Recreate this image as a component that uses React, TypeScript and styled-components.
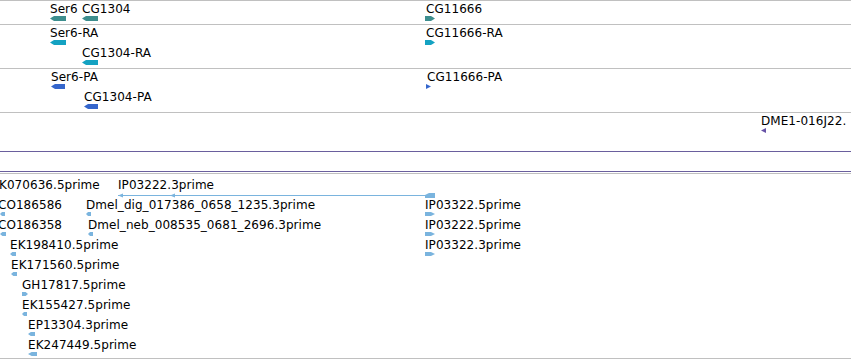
import React from 'react';
import styled, { createGlobalStyle } from 'styled-components';

const GlobalStyle = createGlobalStyle`
  html, body { margin: 0; padding: 0; background: #ffffff; }
  body { font-family: "DejaVu Sans", "Noto Sans", sans-serif; font-size: 12px; color: #000; }
`;

const GRAY = '#c0c0c0';
const PURPLE_LINE = '#6a5f9d';
const TEAL = '#3d8e8e';
const CYAN = '#14a2c2';
const BLUE = '#3566cc';
const VIOLET = '#6652a6';
const EST = '#7ab4de';

const Browser = styled.div`
  width: 851px;
  height: 360px;
  overflow: hidden;
  display: flex;
  flex-direction: column;
  background: #fff;
`;

const GeneTrack = styled.div`
  display: flex;
  flex-direction: column;
  border-top: 1px solid ${GRAY};
`;

const Lane = styled.div<{ $h: number; $edge?: string }>`
  position: relative;
  flex-shrink: 0;
  height: ${p => p.$h}px;
  border-bottom: 1px solid ${p => p.$edge ?? GRAY};
  overflow: hidden;
`;

const Divider = styled.div`
  flex-shrink: 0;
  height: 19px;
  border-bottom: 1px solid ${PURPLE_LINE};
`;

const EstTrack = styled.div`
  margin-top: 1px;
  border-top: 1px solid ${GRAY};
  border-bottom: 1px solid ${GRAY};
  padding: 3px 0 1px;
  display: flex;
  flex-direction: column;
`;

const EstRow = styled.div`
  position: relative;
  height: 20px;
  flex-shrink: 0;
`;

const Feature = styled.div<{ $x: number; $y: number }>`
  position: absolute;
  left: ${p => p.$x}px;
  top: ${p => p.$y}px;
  display: flex;
  flex-direction: column;
  align-items: flex-start;
`;

const Label = styled.span<{ $dx?: number }>`
  display: block;
  height: 14px;
  line-height: 14px;
  white-space: nowrap;
  letter-spacing: 0.05px;
  margin-left: ${p => p.$dx ?? 0}px;
`;

const GlyphSvg = styled.svg<{ $dx?: number }>`
  display: block;
  margin-left: ${p => p.$dx ?? 0}px;
`;

type Dir = 'L' | 'R' | 'TL' | 'TR';

type GlyphSpec = { w: number; h: number; dir: Dir; color: string; dx?: number };

function shape(w: number, h: number, dir: Dir): string {
  const m = h / 2;
  const a = Math.min(4, w * 0.4);
  switch (dir) {
    case 'L':
      return `0,${m} ${a},0 ${w},0 ${w},${h} ${a},${h}`;
    case 'R':
      return `0,0 ${w - a},0 ${w},${m} ${w - a},${h} 0,${h}`;
    case 'TL':
      return `0,${m} ${w},0 ${w},${h}`;
    case 'TR':
      return `0,0 ${w},${m} 0,${h}`;
  }
}

const Glyph: React.FC<GlyphSpec> = ({ w, h, dir, color, dx }) => (
  <GlyphSvg $dx={dx} width={w} height={h} viewBox={`0 0 ${w} ${h}`}>
    <polygon points={shape(w, h, dir)} fill={color} />
  </GlyphSvg>
);

type FeatureSpec = { label: string; x: number; y: number; ldx?: number; glyph: GlyphSpec };

const FeatureItem: React.FC<FeatureSpec> = ({ label, x, y, ldx, glyph }) => (
  <Feature $x={x} $y={y}>
    <Label $dx={ldx}>{label}</Label>
    <Glyph {...glyph} />
  </Feature>
);

const lanes: { h: number; edge?: string; features: FeatureSpec[] }[] = [
  {
    h: 23,
    features: [
      { label: 'Ser6', x: 50, y: 1, glyph: { w: 16, h: 5, dir: 'L', color: TEAL } },
      { label: 'CG1304', x: 82, y: 1, glyph: { w: 16, h: 5, dir: 'L', color: TEAL } },
      { label: 'CG11666', x: 425, y: 1, ldx: 1, glyph: { w: 10, h: 5, dir: 'R', color: TEAL } },
    ],
  },
  {
    h: 43,
    features: [
      { label: 'Ser6-RA', x: 50, y: 1, glyph: { w: 16, h: 5, dir: 'L', color: CYAN } },
      { label: 'CG1304-RA', x: 82, y: 21, glyph: { w: 16, h: 5, dir: 'L', color: CYAN } },
      { label: 'CG11666-RA', x: 425, y: 1, ldx: 1, glyph: { w: 10, h: 5, dir: 'R', color: CYAN } },
    ],
  },
  {
    h: 43,
    features: [
      { label: 'Ser6-PA', x: 51, y: 1, glyph: { w: 14, h: 5, dir: 'L', color: BLUE } },
      { label: 'CG1304-PA', x: 84, y: 21, glyph: { w: 14, h: 5, dir: 'L', color: BLUE } },
      { label: 'CG11666-PA', x: 426, y: 1, ldx: 1, glyph: { w: 5, h: 5, dir: 'TR', color: BLUE } },
    ],
  },
  {
    h: 38,
    edge: PURPLE_LINE,
    features: [
      { label: 'DME1-016J22.', x: 761, y: 1, glyph: { w: 5, h: 5, dir: 'TL', color: VIOLET } },
    ],
  },
];

const est = (label: string, x: number, w: number, dir: Dir, ldx = 0, gdx = 0): FeatureSpec => ({
  label,
  x,
  y: 1,
  ldx,
  glyph: { w, h: 4, dir, color: EST, dx: gdx },
});

const estRows: FeatureSpec[][] = [
  [],
  [
    est('CO186586', -2, 5, 'L', 0, 2),
    est('Dmel_dig_017386_0658_1235.3prime', 86, 5, 'L'),
    est('IP03322.5prime', 425, 10, 'R'),
  ],
  [
    est('CO186358', -2, 6, 'L', 0, 2),
    est('Dmel_neb_008535_0681_2696.3prime', 88, 5, 'L'),
    est('IP03222.5prime', 425, 10, 'R'),
  ],
  [est('EK198410.5prime', 10, 6, 'L'), est('IP03322.3prime', 425, 10, 'R')],
  [est('EK171560.5prime', 11, 6, 'L')],
  [est('GH17817.5prime', 22, 6, 'R')],
  [est('EK155427.5prime', 22, 5, 'L')],
  [est('EP13304.3prime', 28, 7, 'L')],
  [est('EK247449.5prime', 28, 9, 'L')],
];

const SplicedSvg = styled.svg`
  display: block;
  margin-top: 1px;
`;

const SplicedEst: React.FC = () => {
  const w = 318;
  return (
    <Feature $x={118} $y={1}>
      <Label>IP03222.3prime</Label>
      <SplicedSvg width={w} height={6} viewBox={`0 0 ${w} 6`}>
        <line x1={0} y1={2.5} x2={308} y2={2.5} stroke={EST} strokeWidth={1} />
        <polygon points="0,2.5 5,0.5 5,4.5" fill={EST} />
        <polygon points="52,2.5 57,0.5 57,4.5" fill={EST} />
        <polygon points="307,2 311,0 317,0 317,5 307,5" fill={EST} />
      </SplicedSvg>
    </Feature>
  );
};

export default function App() {
  return (
    <>
      <GlobalStyle />
      <Browser>
        <GeneTrack>
          {lanes.map((lane, i) => (
            <Lane key={i} $h={lane.h} $edge={lane.edge}>
              {lane.features.map(f => (
                <FeatureItem key={f.label} {...f} />
              ))}
            </Lane>
          ))}
        </GeneTrack>
        <Divider />
        <EstTrack>
          {estRows.map((row, i) => (
            <EstRow key={i}>
              {i === 0 && (
                <>
                  <Feature $x={-1} $y={1}>
                    <Label>K070636.5prime</Label>
                  </Feature>
                  <SplicedEst />
                </>
              )}
              {row.map(f => (
                <FeatureItem key={f.label} {...f} />
              ))}
            </EstRow>
          ))}
        </EstTrack>
      </Browser>
    </>
  );
}
